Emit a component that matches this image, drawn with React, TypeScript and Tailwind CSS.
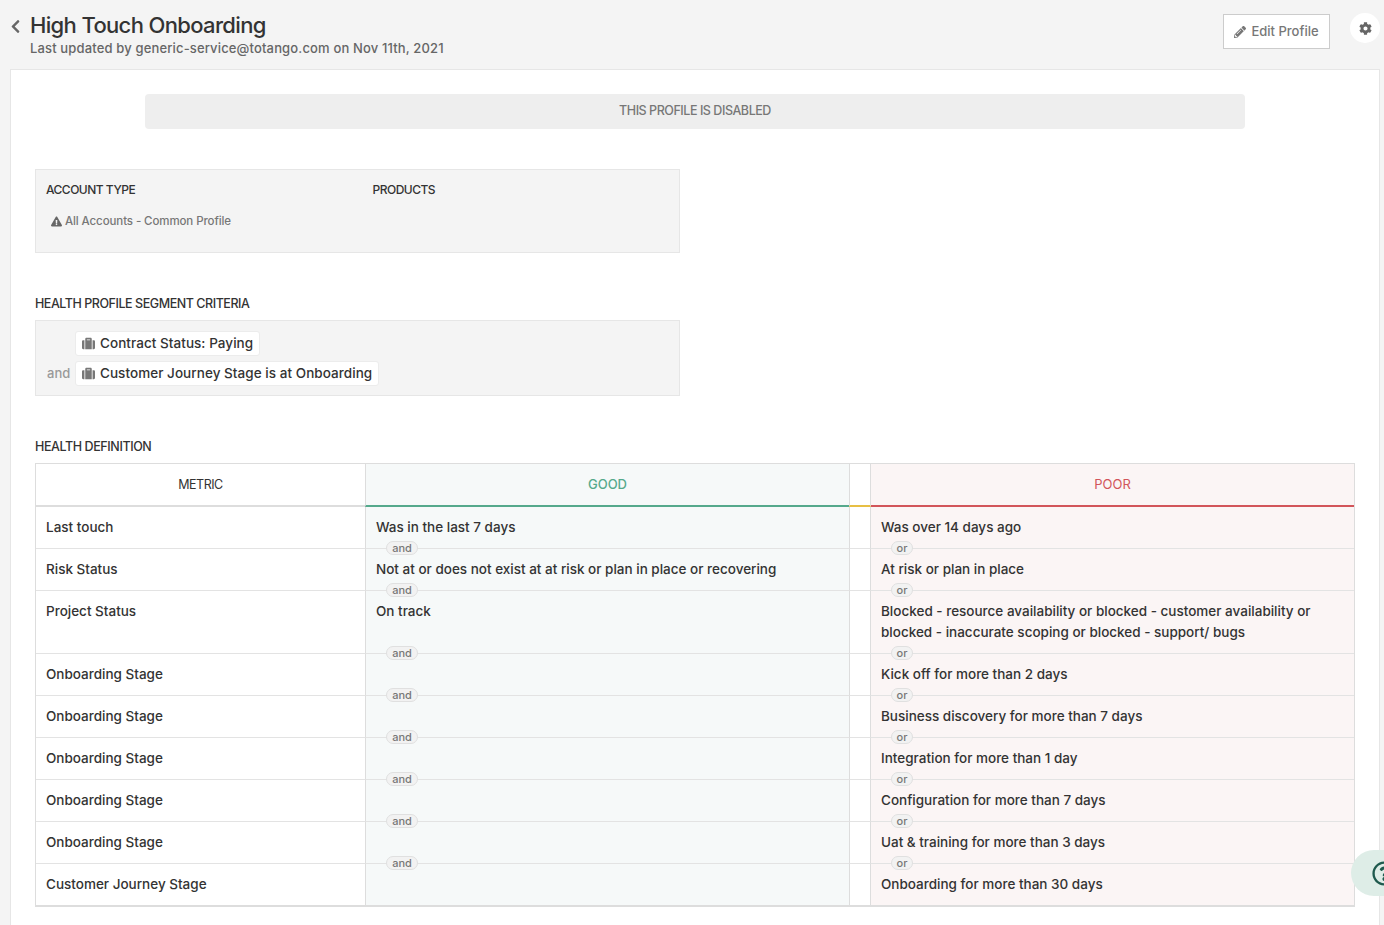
import { FaChevronLeft, FaCog, FaExclamationTriangle, FaPencilAlt, FaRegQuestionCircle, FaSuitcase } from "react-icons/fa";

const rows = [
  { m: "Last touch", g: "Was in the last 7 days", p: "Was over 14 days ago" },
  { m: "Risk Status", g: "Not at or does not exist at at risk or plan in place or recovering", p: "At risk or plan in place" },
  { m: "Project Status", g: "On track", p: "Blocked - resource availability or blocked - customer availability or blocked - inaccurate scoping or blocked - support/ bugs" },
  { m: "Onboarding Stage", g: "", p: "Kick off for more than 2 days" },
  { m: "Onboarding Stage", g: "", p: "Business discovery for more than 7 days" },
  { m: "Onboarding Stage", g: "", p: "Integration for more than 1 day" },
  { m: "Onboarding Stage", g: "", p: "Configuration for more than 7 days" },
  { m: "Onboarding Stage", g: "", p: "Uat & training for more than 3 days" },
  { m: "Customer Journey Stage", g: "", p: "Onboarding for more than 30 days" },
];

function Pill({ label, wide }: { label: string; wide: boolean }) {
  return (
    <span className={`absolute bottom-[-7px] left-[20px] z-10 flex h-[14px] items-center justify-center rounded-full border border-[#e0e0e0] bg-[#f2f2f2] text-[11px] leading-none text-[#777] ${wide ? "w-[32px]" : "w-[22px]"}`}>
      {label}
    </span>
  );
}

function Chip({ label }: { label: string }) {
  return (
    <span className="flex h-[25px] items-center gap-[5px] rounded-[3px] border border-[#ececec] bg-white px-[6px] text-[13.5px] tracking-[0.05px] text-[#333]">
      <FaSuitcase className="text-[13px] text-[#777]" />
      {label}
    </span>
  );
}

export default function App() {
  return (
    <div className="relative flex h-[925px] w-[1384px] flex-col overflow-hidden bg-[#f4f4f4] font-[Inter,sans-serif] font-[450] text-[#333]">
      <header className="flex h-[69px] shrink-0 items-start pl-[10px] pr-[4px]">
        <FaChevronLeft className="mt-[19px] h-[15px] w-[11px] shrink-0 text-[#666]" />
        <div className="ml-[9px] mt-[10px] flex-1">
          <h1 className="text-[22px] leading-[31px] tracking-[-0.65px] text-[#333]">High Touch Onboarding</h1>
          <p className="mt-[-1px] text-[13px] leading-[16px] tracking-[0.15px] text-[#666]">Last updated by generic-service@totango.com on Nov 11th, 2021</p>
        </div>
        <button className="mt-[14px] flex h-[35px] w-[107px] items-center justify-center gap-[5px] border border-[#ccc] bg-white text-[13px] text-[#777]">
          <FaPencilAlt className="text-[12px] text-[#777]" />
          Edit Profile
        </button>
        <span className="ml-[20px] mt-[13px] flex h-[30px] w-[30px] items-center justify-center rounded-full bg-white">
          <FaCog className="text-[13px] text-[#666]" />
        </span>
      </header>

      <main className="ml-[10px] h-[900px] w-[1370px] shrink-0 border border-[#e6e6e6] bg-white px-[24px] pt-[24px]">
        <div className="mx-[110px] flex h-[35px] items-center justify-center rounded-[4px] bg-[#eeeeee] text-[12.5px] tracking-[-0.45px] text-[#777]">
          THIS PROFILE IS DISABLED
        </div>

        <section className="mt-[40px] flex h-[84px] w-[645px] border border-[#e6e6e6] bg-[#f4f4f4] pl-[10px] pt-[12px]">
          <div className="w-[326.5px]">
            <h3 className="text-[12px] font-medium leading-[16px] tracking-[-0.5px] text-[#333]">ACCOUNT TYPE</h3>
            <p className="ml-[5px] mt-[15px] flex items-center gap-[3px] text-[11.5px] leading-[16px] tracking-[-0.1px] text-[#777]">
              <FaExclamationTriangle className="text-[11px] text-[#666]" />
              All Accounts - Common Profile
            </p>
          </div>
          <h3 className="text-[12px] font-medium leading-[16px] tracking-[-0.5px] text-[#333]">PRODUCTS</h3>
        </section>

        <h2 className="mt-[42px] text-[12.5px] leading-[17px] tracking-[-0.45px] text-[#333]">HEALTH PROFILE SEGMENT CRITERIA</h2>
        <section className="mt-[8px] flex h-[76px] w-[645px] flex-col gap-[5px] border border-[#e6e6e6] bg-[#f4f4f4] pl-[11px] pt-[10px]">
          <div className="flex items-center pl-[28px]">
            <Chip label="Contract Status: Paying" />
          </div>
          <div className="flex items-center gap-[4px]">
            <span className="w-[24px] text-[13px] text-[#999]">and</span>
            <Chip label="Customer Journey Stage is at Onboarding" />
          </div>
        </section>

        <h2 className="mt-[42px] text-[12.5px] leading-[17px] tracking-[-0.4px] text-[#333]">HEALTH DEFINITION</h2>

        <div className="mt-[8px] border border-b-2 border-[#dddddd] text-[13.5px] leading-[21px]">
          <div className="flex h-[43px] text-[13px] leading-[41px] font-medium">
            <div className="w-[329px] border-b-2 border-[#dddddd] text-center text-[12.5px] font-normal tracking-[-0.5px] text-[#333]">METRIC</div>
            <div className="w-[484px] border-b-2 border-l border-[#55a98c] border-l-[#dddddd] bg-[#f6f9f9] text-center text-[#55a98c]">GOOD</div>
            <div className="w-[22px] border-x border-b-2 border-[#e7bf44] border-x-[#dddddd]" />
            <div className="flex-1 border-b-2 border-[#d2555a] bg-[#fbf5f5] text-center font-normal text-[#d2555a]">POOR</div>
          </div>
          {rows.map((r, i) => {
            const last = i === rows.length - 1;
            const line = last ? "" : "border-b border-[#e3e3e3]";
            return (
              <div key={i} className="flex">
                <div className={`w-[329px] px-[10px] py-[10px] ${line}`}>{r.m}</div>
                <div className={`relative w-[484px] border-l border-l-[#dddddd] bg-[#f6f9f9] px-[10px] py-[10px] ${line}`}>
                  {r.g}
                  {!last && <Pill label="and" wide />}
                </div>
                <div className={`w-[22px] border-x border-x-[#dddddd] ${line}`} />
                <div className={`relative flex-1 bg-[#fbf5f5] px-[10px] py-[10px] ${line}`}>
                  {r.p}
                  {!last && <Pill label="or" wide={false} />}
                </div>
              </div>
            );
          })}
        </div>
      </main>

      <span className="absolute left-[1351px] top-[850px] flex h-[46px] w-[60px] items-center rounded-full bg-[#deede7] pl-[21px] text-[25px] text-[#1f5a4e]">
        <FaRegQuestionCircle />
      </span>
    </div>
  );
}
